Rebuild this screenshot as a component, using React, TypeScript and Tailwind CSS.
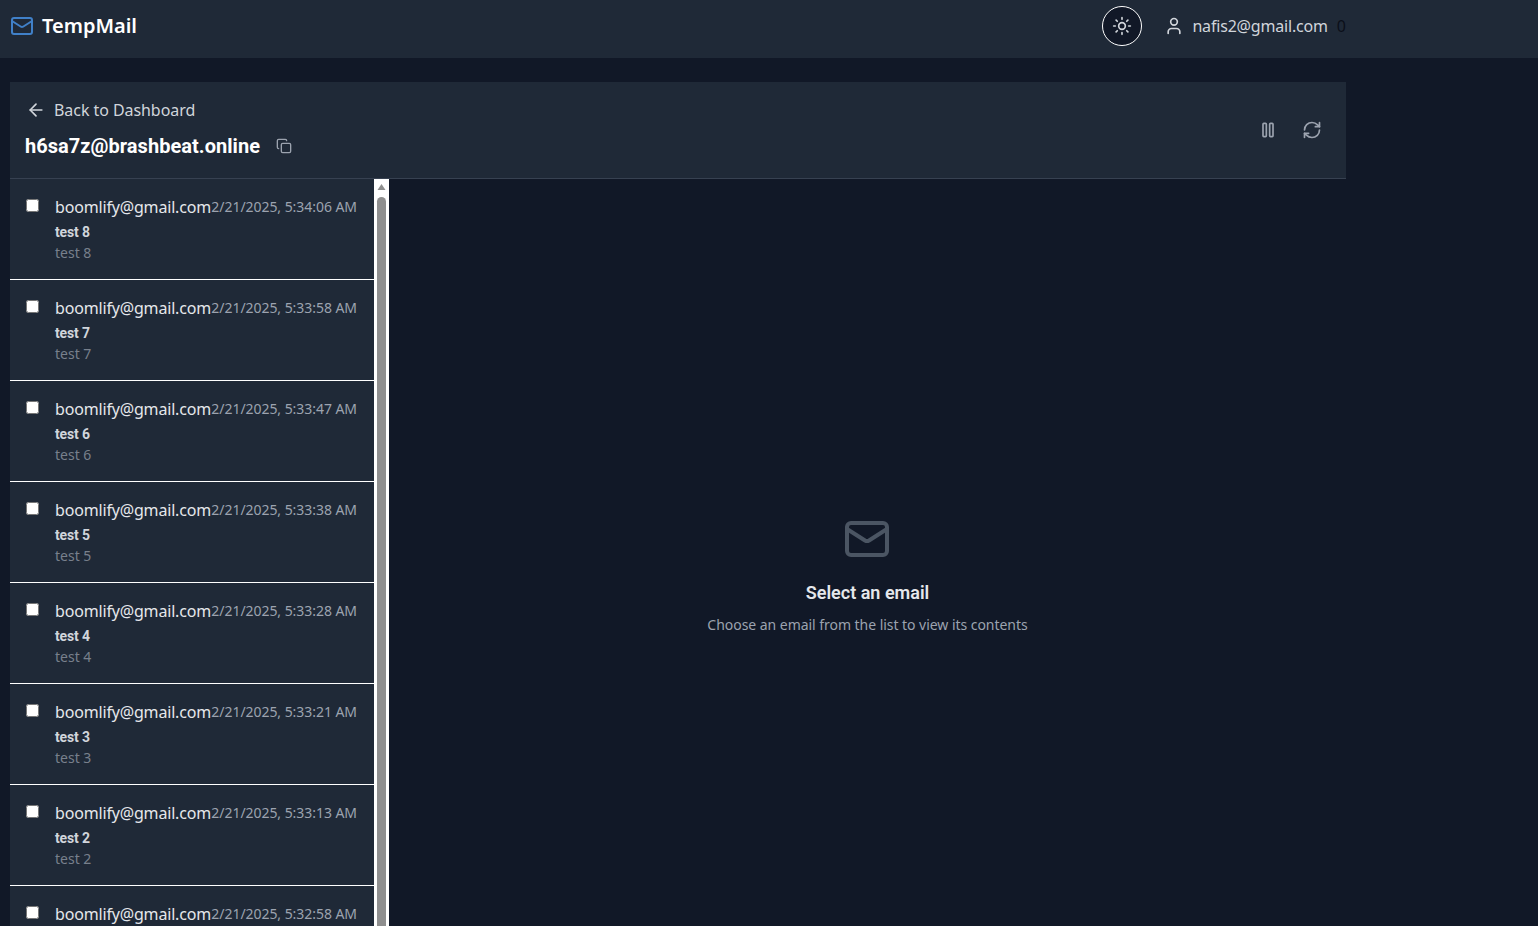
import { ArrowLeft, Copy, Mail, RefreshCw, Sun, User } from "lucide-react";

const emails = [
  { time: "2/21/2025, 5:34:06 AM", subject: "test 8" },
  { time: "2/21/2025, 5:33:58 AM", subject: "test 7" },
  { time: "2/21/2025, 5:33:47 AM", subject: "test 6" },
  { time: "2/21/2025, 5:33:38 AM", subject: "test 5" },
  { time: "2/21/2025, 5:33:28 AM", subject: "test 4" },
  { time: "2/21/2025, 5:33:21 AM", subject: "test 3" },
  { time: "2/21/2025, 5:33:13 AM", subject: "test 2" },
  { time: "2/21/2025, 5:32:58 AM", subject: "test 1" },
];

function EmailRow({ time, subject }: { time: string; subject: string }) {
  return (
    <div className="flex h-[101px] shrink-0 border-b border-white bg-[#1f2937] pl-[16px] pr-[17px] pt-[16px]">
      <input type="checkbox" className="mt-[4px] h-[13px] w-[13px] shrink-0" />
      <div className="ml-[16px] min-w-0 flex-1">
        <div className="flex items-center justify-between whitespace-nowrap">
          <span className="text-[16px] leading-[24px] tracking-[-0.17px] text-[#e5e7eb]">boomlify@gmail.com</span>
          <span className="text-[14px] leading-[20px] tracking-[-0.05px] text-[#9ca3af]">{time}</span>
        </div>
        <p className="mt-[3px] font-['Roboto',sans-serif] text-[14px] font-bold leading-[20px] tracking-[-0.15px] text-[#d1d5db]">
          {subject}
        </p>
        <p className="mt-[1px] text-[14px] leading-[20px] text-[#78808c]">{subject}</p>
      </div>
    </div>
  );
}

export default function App() {
  return (
    <div className="h-[926px] overflow-hidden bg-[#111827] font-['Noto_Sans',sans-serif]">
      <header className="flex h-[58px] items-center justify-between bg-[#1f2937] pb-[6px] pl-[10px] pr-[192px]">
        <div className="flex items-center gap-[8px]">
          <Mail className="h-[24px] w-[24px] text-[#4080c8]" strokeWidth={2} />
          <span className="text-[20px] font-semibold leading-[28px] text-white">TempMail</span>
        </div>
        <div className="flex items-center">
          <button className="flex h-[40px] w-[40px] items-center justify-center rounded-full border-[1.5px] border-white bg-[#111827]">
            <Sun className="h-[20px] w-[20px] text-[#d1d5db]" strokeWidth={2} />
          </button>
          <User className="ml-[22px] h-[20px] w-[20px] text-[#d1d5db]" strokeWidth={2} />
          <span className="ml-[8px] text-[16px] leading-[24px] tracking-[-0.18px] text-[#d1d5db]">nafis2@gmail.com</span>
          <span className="ml-[9px] text-[16px] leading-[24px] text-[#0b0f19]">0</span>
        </div>
      </header>

      <main className="ml-[10px] mt-[24px] w-[1336px]">
        <div className="flex h-[97px] items-center justify-between border-b border-[#374151] bg-[#1f2937] pl-[15px] pr-[24px]">
          <div className="pb-[2px]">
            <div className="flex items-center gap-[8px] pl-[1px] text-[#d1d5db]">
              <ArrowLeft className="h-[20px] w-[20px]" strokeWidth={2} />
              <span className="text-[16px] leading-[24px] tracking-[-0.06px]">Back to Dashboard</span>
            </div>
            <div className="mt-[10px] flex items-center">
              <span className="font-['Roboto',sans-serif] text-[20px] font-bold leading-[28px] tracking-[0.04px] text-white">
                h6sa7z@brashbeat.online
              </span>
              <Copy className="ml-[16px] h-[16px] w-[16px] text-[#9ca3af]" strokeWidth={2} />
            </div>
          </div>
          <div className="flex items-center gap-[24px] text-[#9ca3af]">
            <svg
              viewBox="0 0 24 24"
              className="h-[20px] w-[20px]"
              fill="none"
              stroke="currentColor"
              strokeWidth={2}
              strokeLinecap="round"
              strokeLinejoin="round"
            >
              <rect x="6" y="4" width="4" height="16" rx="1" />
              <rect x="14" y="4" width="4" height="16" rx="1" />
            </svg>
            <RefreshCw className="h-[20px] w-[20px]" strokeWidth={2} />
          </div>
        </div>

        <div className="flex h-[747px]">
          <div className="flex w-[364px] shrink-0 flex-col overflow-hidden">
            {emails.map((email) => (
              <EmailRow key={email.time} time={email.time} subject={email.subject} />
            ))}
          </div>
          <div className="flex w-[15px] shrink-0 flex-col items-center bg-white">
            <svg viewBox="0 0 15 18" className="h-[18px] w-[15px] shrink-0">
              <path d="M7.5 5 L11.5 11 L3.5 11 Z" fill="#8f8f8f" />
            </svg>
            <div className="w-[9px] flex-1 rounded-t-[5px] bg-[#8f8f8f]" />
          </div>
          <div className="flex flex-1 flex-col items-center pt-[336px]">
            <Mail className="mr-[2px] h-[48px] w-[48px] text-[#4b5563]" strokeWidth={2} />
            <h3 className="mt-[16px] font-['Roboto',sans-serif] text-[18px] font-semibold leading-[28px] text-[#e5e7eb]">
              Select an email
            </h3>
            <p className="mt-[8px] text-[14px] leading-[20px] tracking-[-0.04px] text-[#9ca3af]">
              Choose an email from the list to view its contents
            </p>
          </div>
        </div>
      </main>
    </div>
  );
}
